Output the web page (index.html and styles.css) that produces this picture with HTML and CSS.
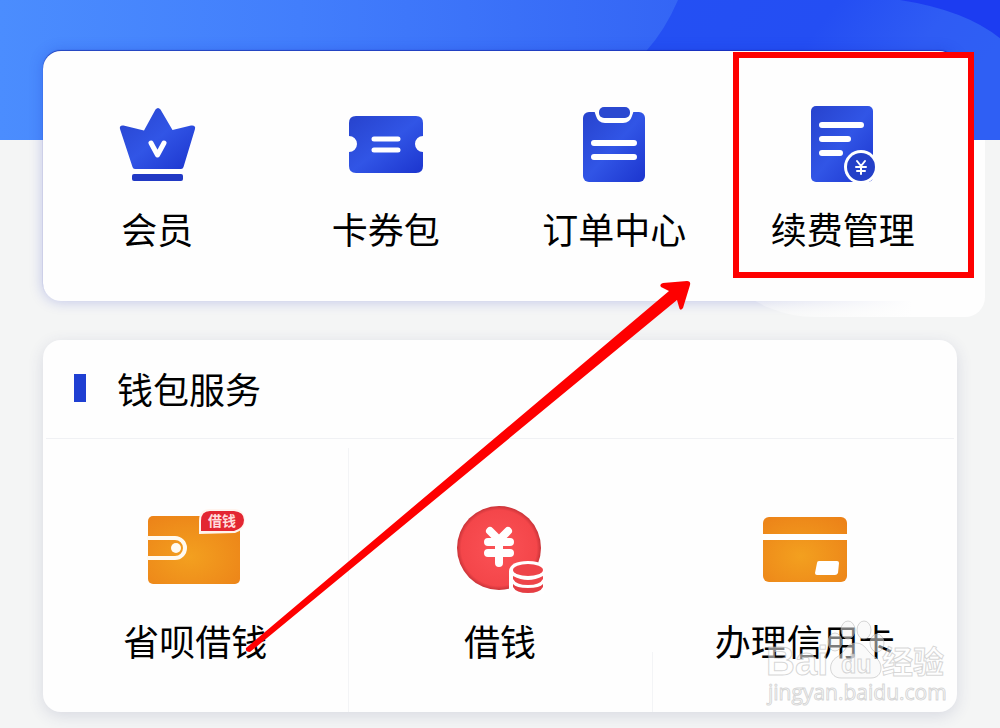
FILE: index.html
```html
<!DOCTYPE html>
<html lang="zh-CN">
<head>
<meta charset="utf-8">
<meta name="viewport" content="width=device-width, initial-scale=1">
<title>钱包服务</title>
<link rel="stylesheet" href="styles.css">
</head>
<body>
<svg class="defs" width="0" height="0" aria-hidden="true">
  <defs>
    <linearGradient id="blue" x1="0" y1="0" x2="1" y2="1"><stop offset="0" stop-color="#2743cd"/><stop offset=".5" stop-color="#3155e6"/><stop offset="1" stop-color="#1c35ce"/></linearGradient>
    <radialGradient id="orange" cx=".45" cy=".6" r=".75"><stop offset="0" stop-color="#f3a01f"/><stop offset="1" stop-color="#ec8218"/></radialGradient>
    <radialGradient id="red" cx=".5" cy=".5" r=".5"><stop offset="0" stop-color="#fb5256"/><stop offset=".9" stop-color="#f4464a"/><stop offset="1" stop-color="#c93338"/></radialGradient>
  </defs>
</svg>
<div class="page">
  <svg class="banner" viewBox="0 0 1000 139" preserveAspectRatio="none" aria-hidden="true">
    <defs>
      <linearGradient id="sky" x1="0" y1="0" x2="1" y2="0"><stop offset="0" stop-color="#4b8dfe"/><stop offset=".3" stop-color="#427efc"/><stop offset=".68" stop-color="#3465f5"/><stop offset="1" stop-color="#2f5ff5"/></linearGradient>
      <linearGradient id="deep" x1="0" y1="0" x2="1" y2=".3"><stop offset="0" stop-color="#2450f3"/><stop offset=".5" stop-color="#244ef3"/><stop offset=".8" stop-color="#2f5cf4"/><stop offset="1" stop-color="#2f5ff4"/></linearGradient>
    </defs>
    <rect width="1000" height="139" fill="url(#sky)"/>
    <path d="M678 0Q665 30 646 51V139H1000V0Z" fill="url(#deep)"/>
    <path d="M900 0Q965 10 1000 38V0Z" fill="#1c3cf1"/>
  </svg>
  <main class="content">
    <nav class="card shortcuts" aria-label="快捷入口">
      <a class="item" href="#member">
        <svg class="icon" viewBox="0 0 100 90" aria-hidden="true">
          <path d="M53.500 9.500L65.500 30L84 25.500Q89 25 88 29L76.500 67Q76 69 74 69H28Q26 69 25.500 67L13 29Q12 25 16.500 25.500L37 30.500L48.500 9.500Q51 6.500 53.500 9.500Z" fill="url(#blue)"/>
          <rect x="25" y="74" width="51" height="7" rx="2" fill="#2139c4"/>
          <path d="M44 43L50.500 55L57 43" fill="none" stroke="#fff" stroke-width="5" stroke-linecap="round" stroke-linejoin="round"/>
        </svg>
        <span class="label">会员</span>
      </a>
      <a class="item" href="#coupons">
        <svg class="icon" viewBox="0 0 100 90" aria-hidden="true">
          <path d="M20 16H80Q87 16 87 23V36A8 8 0 0 0 87 52V66Q87 73 80 73H20Q13 73 13 66V52A8 8 0 0 0 13 36V23Q13 16 20 16Z" fill="url(#blue)"/>
          <path d="M38 39H62M38 50H62" stroke="#fff" stroke-width="5" stroke-linecap="round"/>
        </svg>
        <span class="label">卡券包</span>
      </a>
      <a class="item" href="#orders">
        <svg class="icon" viewBox="0 0 100 90" aria-hidden="true">
          <rect x="19" y="12" width="62" height="70" rx="6" fill="url(#blue)"/>
          <path d="M30 10H70Q69 13 68 16Q66 23 59 23H41Q34 23 32 16Q31 13 30 10Z" fill="#fff"/>
          <rect x="35" y="7" width="31" height="11" rx="5" fill="#2a48d0"/>
          <path d="M30 43H70M30 57H70" stroke="#fff" stroke-width="6" stroke-linecap="round"/>
        </svg>
        <span class="label">订单中心</span>
      </a>
      <a class="item marked" href="#renewals">
        <svg class="icon" viewBox="0 0 100 90" aria-hidden="true">
          <rect x="18" y="6" width="62" height="76" rx="5" fill="url(#blue)"/>
          <path d="M29 25H68M29 39H55M29 53H47" stroke="#fff" stroke-width="6" stroke-linecap="round"/>
          <circle cx="68" cy="67" r="17" fill="#fff"/>
          <circle cx="68" cy="67" r="14" fill="#2440c8"/>
          <path d="M64 61L68 66L72 61M63 67H73M64 71H72M68 66V74" fill="none" stroke="#fff" stroke-width="2" stroke-linecap="round"/>
        </svg>
        <span class="label">续费管理</span>
      </a>
    </nav>
    <section class="card services" aria-labelledby="wallet-title">
      <header class="heading"><h1 class="title" id="wallet-title">钱包服务</h1></header>
      <div class="tiles">
        <a class="tile" href="#shengbei">
          <svg class="picture" viewBox="0 0 100 100" aria-hidden="true">
            <rect x="3" y="16" width="92" height="68" rx="5" fill="url(#orange)"/>
            <path d="M2 38H30A10 10 0 0 1 30 58H2" fill="none" stroke="#fffaf0" stroke-width="4"/>
            <circle cx="31" cy="48" r="5" fill="#fffaf0"/>
            <path d="M54 34V21Q54 9 65 9H90Q100 10 100 20T90 33Z" fill="#fff4ee"/>
            <path d="M56 31V21Q56 11 65 11H89Q99 12 99 20T89 31Z" fill="#e32632"/>
            <text class="badge-text" x="77" y="26" text-anchor="middle">借钱</text>
          </svg>
          <span class="label">省呗借钱</span>
        </a>
        <a class="tile" href="#loan">
          <svg class="picture" viewBox="0 0 100 100" aria-hidden="true">
            <circle cx="49" cy="48" r="42" fill="url(#red)"/>
            <path d="M40 31L49 40L58 31M38 42H60M38 53H60M49 40V63" fill="none" stroke="#fff" stroke-width="8" stroke-linecap="round" stroke-linejoin="round"/>
            <path d="M59 94V71Q60 61 78 61Q88 61 94 65V94Z" fill="#fff"/>
            <ellipse cx="78" cy="70" rx="15" ry="6" fill="#ee4449"/>
            <path d="M63 76Q78 84 93 76V79Q90 85 78 85Q66 85 63 79Z" fill="#ee4449"/>
            <path d="M63 84Q66 88 78 88Q90 88 93 84V87Q90 93 78 93Q66 93 63 87Z" fill="#e53d43"/>
          </svg>
          <span class="label">借钱</span>
        </a>
        <a class="tile" href="#credit-card">
          <svg class="picture" viewBox="0 0 100 100" aria-hidden="true">
            <rect x="8" y="17" width="84" height="65" rx="6" fill="url(#orange)"/>
            <path d="M7 37H93" stroke="#fff" stroke-width="6"/>
            <path d="M64 61H82Q84 61 84 63L83 73Q82 75 80 75H62Q60 75 60 73L62 63Q62 61 64 61Z" fill="#fff"/>
          </svg>
          <span class="label">办理信用卡</span>
        </a>
      </div>
      <svg class="watermark" viewBox="0 0 184 90" role="img" aria-label="Baidu 经验">
        <g class="wm-shape">
          <ellipse cx="72" cy="24" rx="7" ry="9"/><ellipse cx="85" cy="12" rx="7" ry="9"/><ellipse cx="101" cy="12" rx="7" ry="9"/><ellipse cx="114" cy="25" rx="7" ry="9"/>
          <path d="M93 25C83 25 82 35 74 39C64 45 66 60 78 60H108C120 60 121 45 112 39C104 35 103 25 93 25Z"/>
        </g>
        <text class="wm-brand" x="3" y="57">Bai</text>
        <text class="wm-du" x="78" y="55">du</text>
        <text class="wm-cjk" x="119" y="55">经验</text>
        <text class="wm-url" x="5" y="82">jingyan.baidu.com</text>
      </svg>
    </section>
  </main>
  <svg class="arrow" viewBox="0 0 1000 728" aria-hidden="true">
    <path d="M246 648L669 291L661 287Q659 284 663 283L687 281Q691 281 690 285L683 308Q680 312 679 307L677 300L250 652Q245 652 246 648Z" fill="#fe0000"/>
  </svg>
</div>
</body>
</html>
```

FILE: styles.css
```css
* { box-sizing: border-box; }

body {
  margin: 0;
  background: #f4f5f5;
  color: #000;
  font-family: "Noto Sans CJK SC", sans-serif;
}

.defs { position: absolute; }

.page {
  position: relative;
  min-height: 100vh;
  overflow: hidden;
}

.banner {
  position: absolute;
  top: 0;
  left: 0;
  width: 100%;
  height: 140px;
}

.content {
  position: relative;
  display: grid;
  gap: 39px;
  padding: 51px 43px 16px;
}

.card {
  position: relative;
  border-radius: 18px;
  background: #fefefe;
  box-shadow: 0 4px 16px rgba(50, 60, 110, 0.14);
}

.shortcuts {
  display: grid;
  grid-template-columns: repeat(4, 1fr);
  box-shadow: 0 0 14px rgba(20, 40, 190, 0.25), 0 -1px 1px rgba(16, 30, 150, 0.6);
}

/* Soft white flare spreading past the card's right-hand corner. */
.shortcuts::before,
.shortcuts::after {
  content: "";
  position: absolute;
  background: #fefefe;
}

.shortcuts::before {
  top: 1px;
  right: -14px;
  bottom: 60px;
  width: 60px;
}

.shortcuts::after {
  top: 89px;
  right: -28px;
  bottom: -16px;
  width: 290px;
  border-radius: 0 0 20px 120px;
  background: linear-gradient(90deg, rgba(254, 254, 254, 0), #fefefe 75%);
}

.item,
.tile {
  display: flex;
  flex-direction: column;
  align-items: center;
  color: inherit;
  text-decoration: none;
}

.item {
  position: relative;
  z-index: 1;
  gap: 14px;
  padding: 49px 0;
}

.marked::after {
  content: "";
  position: absolute;
  inset: 1px -17px 23px 4px;
  border: 6px solid #fe0000;
}

.icon { width: 100px; height: 90px; }

.label,
.title {
  font-size: 36px;
  line-height: 48px;
  font-weight: 400;
  white-space: nowrap;
}

.heading {
  display: flex;
  align-items: center;
  gap: 31px;
  margin: 0 3px;
  padding: 24px 28px 26px;
  border-bottom: 1px solid #f0f1f4;
}

.heading::before {
  content: "";
  width: 12px;
  height: 28px;
  background: #1f3fd2;
}

.title { margin: 0; }

.tiles {
  display: grid;
  grid-template-columns: repeat(3, 1fr);
}

.tile {
  gap: 16px;
  padding: 61px 0 48px;
}

.tile + .tile {
  background: linear-gradient(#f3f4f6, #f3f4f6) left bottom / 1px 264px no-repeat;
}

.tile + .tile + .tile { background-size: 1px 60px; }

.picture { width: 100px; height: 100px; }

.badge-text {
  fill: #ffdcdc;
  font-size: 14px;
  font-weight: 700;
}

.watermark {
  position: absolute;
  right: 10px;
  bottom: 4px;
  width: 184px;
  height: 90px;
  overflow: visible;
  fill: rgba(255, 255, 255, 0.55);
  stroke: rgba(175, 175, 175, 0.5);
  stroke-width: 1px;
}

.wm-shape { fill: rgba(245, 245, 245, 0.5); }
.wm-brand { font: 700 40px "Liberation Sans", sans-serif; }
.wm-du { font: 700 25px "Liberation Sans", sans-serif; }
.wm-cjk { font: 700 31px "Noto Sans CJK SC", sans-serif; }
.wm-url { font: 400 21px "Open Sans", sans-serif; }

.arrow {
  position: absolute;
  top: 0;
  left: 0;
  width: 1000px;
  height: 728px;
  pointer-events: none;
}
```
